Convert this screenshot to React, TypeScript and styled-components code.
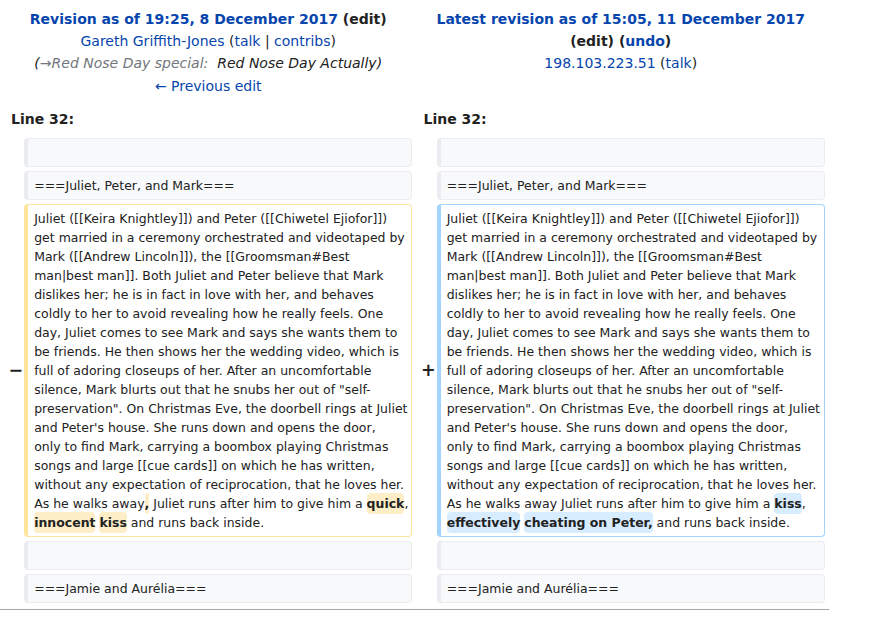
import React from "react";
import styled, { createGlobalStyle } from "styled-components";

const GlobalStyle = createGlobalStyle`
  html, body { margin: 0; padding: 0; background: #fff; }
  body {
    font-family: "DejaVu Sans", "Liberation Sans", sans-serif;
    color: #222;
    font-size: 14px;
  }
`;

const Page = styled.div`
  width: 829px;
`;

const DiffGrid = styled.div`
  display: grid;
  grid-template-columns: 16.2px 388.3px 16.2px 388.3px;
  column-gap: 4px;
  row-gap: 4px;
  padding: 4px;
`;

const TitleCell = styled.div`
  grid-column: span 2;
  text-align: center;
  padding: 3.5px 7px;
  line-height: 22.4px;
  font-size: 14px;
  color: #222;
`;

const TitleLine = styled.div<{ $bold?: boolean; $italic?: boolean }>`
  font-weight: ${(p) => (p.$bold ? 700 : 400)};
  font-style: ${(p) => (p.$italic ? "italic" : "normal")};
  white-space: nowrap;
`;

const Link = styled.a<{ $tone?: "blue" | "dark" | "gray" }>`
  color: ${(p) => (p.$tone === "dark" ? "#222" : p.$tone === "gray" ? "#72777d" : "#0645ad")};
  text-decoration: none;
`;

const LineNo = styled.div`
  grid-column: span 2;
  font-weight: 700;
  font-size: 14px;
  line-height: 22.4px;
  padding: 3.5px 7px;
`;

const Marker = styled.div`
  align-self: center;
  font-size: 17.5px;
  font-weight: 700;
  line-height: 21px;
  padding-left: 4.4px;
  white-space: nowrap;
  color: #222;
`;

type Kind = "context" | "deleted" | "added";

const borderFor = (k: Kind) =>
  k === "deleted" ? "#ffe49c" : k === "added" ? "#a3d3ff" : "#eaecf0";

const LineCell = styled.div<{ $kind: Kind }>`
  font-size: 12.48px;
  line-height: 19px;
  min-height: 19px;
  padding: 4px 6px;
  border: 1px solid ${(p) => borderFor(p.$kind)};
  border-left-width: 4px;
  border-radius: 4px;
  background: ${(p) => (p.$kind === "context" ? "#f8f9fa" : "#fff")};
  color: #222;
  white-space: pre;
  overflow: visible;
`;

const Change = styled.span<{ $kind: "deleted" | "added" }>`
  font-weight: 700;
  background: ${(p) => (p.$kind === "deleted" ? "#feeec8" : "#d8ecff")};
  border-radius: 4px;
  padding: 3px 0;
`;

const BottomRule = styled.div`
  margin-top: 2px;
  border-top: 1px solid #a2a9b1;
`;

const common = [
  "Juliet ([[Keira Knightley]]) and Peter ([[Chiwetel Ejiofor]])",
  "get married in a ceremony orchestrated and videotaped by",
  "Mark ([[Andrew Lincoln]]), the [[Groomsman#Best",
  "man|best man]]. Both Juliet and Peter believe that Mark",
  "dislikes her; he is in fact in love with her, and behaves",
  "coldly to her to avoid revealing how he really feels. One",
  "day, Juliet comes to see Mark and says she wants them to",
  "be friends. He then shows her the wedding video, which is",
  "full of adoring closeups of her. After an uncomfortable",
  'silence, Mark blurts out that he snubs her out of "self-',
  'preservation". On Christmas Eve, the doorbell rings at Juliet',
  "and Peter's house. She runs down and opens the door,",
  "only to find Mark, carrying a boombox playing Christmas",
  "songs and large [[cue cards]] on which he has written,",
  "without any expectation of reciprocation, that he loves her.",
];

const CommonText = () => <>{common.join("\n") + "\n"}</>;

export default function App() {
  return (
    <Page>
      <GlobalStyle />
      <DiffGrid>
        <TitleCell>
          <TitleLine $bold>
            <Link href="#">Revision as of 19:25, 8 December 2017</Link> (
            <Link $tone="dark" href="#">edit</Link>)
          </TitleLine>
          <TitleLine>
            <Link href="#">Gareth Griffith-Jones</Link> (<Link href="#">talk</Link> |{" "}
            <Link href="#">contribs</Link>)
          </TitleLine>
          <TitleLine $italic>
            (<Link $tone="gray" href="#">→Red Nose Day special:</Link>{"\u00a0 "}Red Nose Day Actually)
          </TitleLine>
          <TitleLine>
            <Link href="#">← Previous edit</Link>
          </TitleLine>
        </TitleCell>
        <TitleCell>
          <TitleLine $bold>
            <Link href="#">Latest revision as of 15:05, 11 December 2017</Link>
          </TitleLine>
          <TitleLine $bold>
            (<Link $tone="dark" href="#">edit</Link>) (<Link href="#">undo</Link>)
          </TitleLine>
          <TitleLine>
            <Link href="#">198.103.223.51</Link> (<Link href="#">talk</Link>)
          </TitleLine>
        </TitleCell>

        <LineNo>Line 32:</LineNo>
        <LineNo>Line 32:</LineNo>

        <Marker />
        <LineCell $kind="context">{" "}</LineCell>
        <Marker />
        <LineCell $kind="context">{" "}</LineCell>

        <Marker />
        <LineCell $kind="context">===Juliet, Peter, and Mark===</LineCell>
        <Marker />
        <LineCell $kind="context">===Juliet, Peter, and Mark===</LineCell>

        <Marker>−</Marker>
        <LineCell $kind="deleted">
          <CommonText />
          As he walks away<Change $kind="deleted">,</Change> Juliet runs after him to give him a{" "}
          <Change $kind="deleted">quick</Change>,{"\n"}
          <Change $kind="deleted">innocent</Change> <Change $kind="deleted">kiss</Change> and runs back inside.
        </LineCell>
        <Marker>+</Marker>
        <LineCell $kind="added">
          <CommonText />
          As he walks away Juliet runs after him to give him a <Change $kind="added">kiss</Change>,{"\n"}
          <Change $kind="added">effectively</Change> <Change $kind="added">cheating on Peter,</Change> and runs
          back inside.
        </LineCell>

        <Marker />
        <LineCell $kind="context">{" "}</LineCell>
        <Marker />
        <LineCell $kind="context">{" "}</LineCell>

        <Marker />
        <LineCell $kind="context">===Jamie and Aurélia===</LineCell>
        <Marker />
        <LineCell $kind="context">===Jamie and Aurélia===</LineCell>
      </DiffGrid>
      <BottomRule />
    </Page>
  );
}
